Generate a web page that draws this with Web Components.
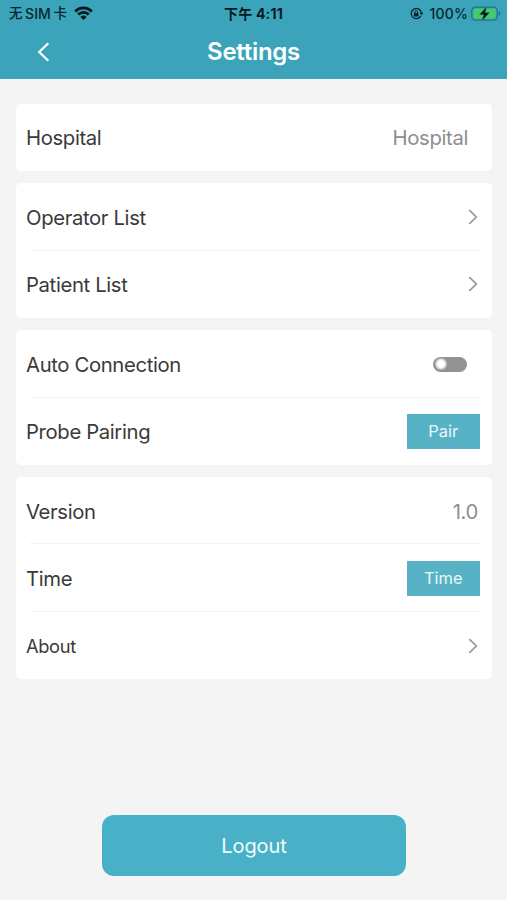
<!DOCTYPE html>
<html lang="en">
<head>
<meta charset="utf-8">
<title>Settings</title>
<style>
    html, body {
        margin: 0;
        height: 100%;
        background: #f4f4f4;
        overflow: hidden;
    }
    body {
        font-family: Inter, "Noto Sans CJK SC", sans-serif;
        color: #3a3a3a;
    }
</style>
</head>
<body>
<settings-page></settings-page>

<script>
const define = (name, html) => {
    const tpl = document.createElement('template');
    tpl.innerHTML = html;
    customElements.define(name, class extends HTMLElement {
        constructor() {
            super();
            this.attachShadow({mode: 'open'});
            this.shadowRoot.appendChild(tpl.content.cloneNode(true));
        }
    });
};

define('status-bar', `
    <style>
        :host {
            display: grid;
            grid-template-columns: 1fr auto 1fr;
            align-items: center;
            height: 27px;
            padding: 0 6px 0 9px;
            color: #08262e;
            font-size: 14px;
            line-height: 27px;
            font-weight: 500;
        }
        div { display: flex; align-items: center; white-space: nowrap; }
        .carrier { font-size: 13.5px; gap: 2.5px; }
        .carrier svg { margin-left: 5px; margin-top: -2px; }
        .sim { font-size: 14px; letter-spacing: 0.1px; }
        .time {
            font-size: 14px;
            font-weight: 700;
            letter-spacing: 0.2px;
            color: #04181e;
            margin-left: -3px;
        }
        .power { justify-content: flex-end; }
        .power span { margin: 0 3px 0 6px; letter-spacing: 0.15px; }
        svg { display: block; }
    </style>
    <div class="carrier">
        <span>无</span><span class="sim">SIM</span><span>卡</span>
        <svg width="19" height="14" viewBox="0 0 19 14" fill="none" stroke="#04181e" stroke-width="2.8">
            <path d="M1.2 5.4a11.6 11.6 0 0 1 16.6 0"/>
            <path d="M4.2 8.6a7.4 7.4 0 0 1 10.6 0"/>
            <path d="M9.5 14 6.4 10.9a4.4 4.4 0 0 1 6.2 0z" fill="#04181e" stroke="none"/>
        </svg>
    </div>
    <div class="time">下午 4:11</div>
    <div class="power">
        <svg width="14" height="13" viewBox="0 0 14 13" fill="none" stroke="#08262e">
            <path d="M10.7 9.2A5.1 5.1 0 1 1 11.3 5.4" stroke-width="1.3"/>
            <path d="M9.4 5.6h4L11.4 8.4z" fill="#08262e" stroke="none"/>
            <rect x="3.9" y="5.9" width="4.6" height="3.6" rx=".6" fill="#08262e" stroke="none"/>
            <path d="M4.9 6V4.8a1.3 1.3 0 0 1 2.6 0V6"/>
        </svg>
        <span>100%</span>
        <svg width="30" height="16" viewBox="0 0 30 16">
            <rect x=".8" y="1.2" width="25.4" height="13" rx="3.6" fill="none" stroke="#25737f" stroke-width="1.2"/>
            <rect x="2.4" y="2.8" width="22.2" height="9.8" rx="2.2" fill="#45cb6b"/>
            <path d="M27.6 5.6v4.2c1-.3 1.7-1.1 1.7-2.1s-.7-1.8-1.7-2.1z" fill="#25737f"/>
            <path d="M15.8.6 8.2 8.7h4.4l-1.8 6.2L18.8 6.5h-4.6z" fill="#04181e" stroke="#45cb6b" stroke-width=".3"/>
        </svg>
    </div>`);

define('nav-bar', `
    <style>
        :host {
            display: grid;
            grid-template-columns: 1fr auto 1fr;
            align-items: center;
            height: 50px;
            color: #fff;
        }
        svg { margin-left: 37px; display: block; }
        h1 {
            margin: 0;
            font-size: 24px;
            line-height: 50px;
            font-weight: 600;
            letter-spacing: -0.3px;
        }
    </style>
    <svg width="13" height="20" viewBox="0 0 13 20" fill="none" stroke="#fff" stroke-width="2.2">
        <path d="M11.3 1.2 2.2 10l9.1 8.8"/>
    </svg>
    <h1><slot></slot></h1>`);

define('settings-card', `
    <style>
        :host {
            display: flex;
            flex-direction: column;
            background: #fff;
            border-radius: 5px;
        }
    </style>
    <slot></slot>`);

define('settings-row', `
    <style>
        :host {
            flex: 1;
            display: flex;
            align-items: center;
            justify-content: space-between;
            margin: 0 12px 0 10px;
            font-size: 20.3px;
            letter-spacing: -0.36px;
        }
        :host(:not(:last-child)) {
            background: linear-gradient(#f2f2f2, #f2f2f2) 4px 100% / 100% 1px no-repeat;
        }
        span { padding-top: var(--text-drop, 1px); }
    </style>
    <span><slot></slot></span>
    <slot name="value"></slot>`);

define('row-value', `
    <style>
        :host {
            color: #8e8e8e;
            margin-right: var(--inset, 2px);
            padding-top: var(--text-drop, 1px);
        }
    </style>
    <slot></slot>`);

define('row-arrow', `
    <style>
        :host { display: block; margin-right: 2px; }
        svg { display: block; }
    </style>
    <svg width="10" height="16" viewBox="0 0 10 16" fill="none" stroke="#999" stroke-width="1.7">
        <path d="M1.3 1.2 8.3 8l-7 6.8"/>
    </svg>`);

define('row-button', `
    <style>
        :host {
            display: block;
            width: 73.5px;
            height: 35px;
            background: #58b2c6;
            color: #e9f7fa;
            font-size: 16.5px;
            line-height: 35px;
            letter-spacing: 0;
            text-align: center;
        }
    </style>
    <slot></slot>`);

define('toggle-switch', `
    <style>
        :host {
            display: flex;
            align-items: center;
            box-sizing: border-box;
            width: 34px;
            height: 15px;
            padding: 0 2px;
            margin: 1px 13.5px 0 0;
            border-radius: 8px;
            background: #929292;
        }
        i {
            width: 12px;
            height: 12px;
            border-radius: 50%;
            background: radial-gradient(#fff 38%, #b4b4b4 72%);
        }
    </style>
    <i></i>`);

define('logout-button', `
    <style>
        :host {
            display: block;
            width: 304px;
            height: 61px;
            border-radius: 12px;
            background: #49b1c7;
            color: #f2fbfc;
            font-size: 20px;
            line-height: 62px;
            letter-spacing: -0.1px;
            text-align: center;
        }
    </style>
    <slot></slot>`);

define('settings-page', `
    <style>
        :host { display: flex; flex-direction: column; height: 900px; }
        header { height: 79px; background: #3ca4ba; }
        main {
            flex: 1;
            display: flex;
            flex-direction: column;
            gap: 12px;
            padding: 25px 15px 24.5px 16px;
        }
        .one { height: 67px; --text-drop: 0px; }
        .two { height: 135px; }
        .three { height: 202px; }
        .three row-button, .three row-arrow { margin-top: 2px; }
        .about { font-size: 18.3px; }
        logout-button { margin: auto auto 0; }
    </style>
    <header>
        <status-bar></status-bar>
        <nav-bar>Settings</nav-bar>
    </header>
    <main>
        <settings-card class="one">
            <settings-row>Hospital<row-value slot="value" style="--inset: 12px">Hospital</row-value></settings-row>
        </settings-card>
        <settings-card class="two">
            <settings-row>Operator List<row-arrow slot="value"></row-arrow></settings-row>
            <settings-row>Patient List<row-arrow slot="value"></row-arrow></settings-row>
        </settings-card>
        <settings-card class="two">
            <settings-row>Auto Connection<toggle-switch slot="value"></toggle-switch></settings-row>
            <settings-row>Probe Pairing<row-button slot="value">Pair</row-button></settings-row>
        </settings-card>
        <settings-card class="three">
            <settings-row>Version<row-value slot="value">1.0</row-value></settings-row>
            <settings-row>Time<row-button slot="value">Time</row-button></settings-row>
            <settings-row class="about">About<row-arrow slot="value"></row-arrow></settings-row>
        </settings-card>
        <logout-button>Logout</logout-button>
    </main>`);
</script>
</body>
</html>
